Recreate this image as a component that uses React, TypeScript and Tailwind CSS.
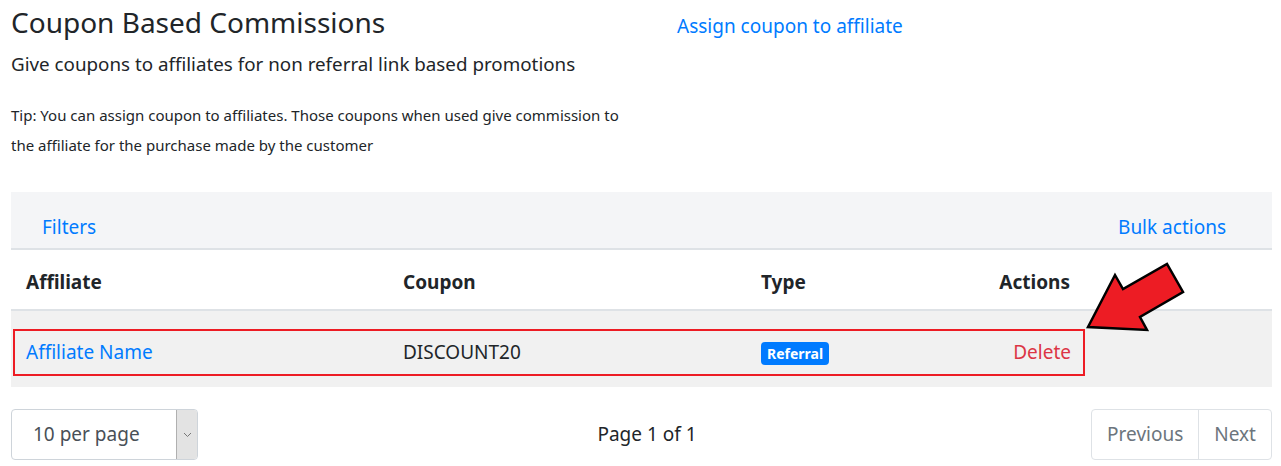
import React from "react";

const cols = "grid grid-cols-[377px_358px_238px_72px] items-center";

function Arrow() {
  return (
    <svg
      className="pointer-events-none absolute left-0 top-0"
      width="1281"
      height="466"
      viewBox="0 0 1281 466"
    >
      <polygon
        points="1088,327 1115,275 1123,289 1167,264 1183,292 1140,317 1147,330"
        fill="#ed1c24"
        stroke="#000"
        strokeWidth="2.5"
        strokeLinejoin="miter"
      />
    </svg>
  );
}

export default function App() {
  return (
    <div className="relative h-[466px] w-[1281px] overflow-hidden bg-white font-['Noto_Sans',sans-serif] text-[#212529]">
      <div className="flex h-[192px]">
        <div className="w-[665px] pl-[11px]">
          <h1 className="pt-[2px] text-[28px] leading-[40px] font-normal">Coupon Based Commissions</h1>
          <p className="mt-[2px] text-[18.8px] leading-[40px]">
            Give coupons to affiliates for non referral link based promotions
          </p>
          <p className="mt-[16px] text-[15px] leading-[30px]">
            Tip: You can assign coupon to affiliates. Those coupons when used give commission to
            <br />
            the affiliate for the purchase made by the customer
          </p>
        </div>
        <div className="pl-[12px] pt-[11px]">
          <a className="text-[19px] leading-[30px] text-[#007bff]">Assign coupon to affiliate</a>
        </div>
      </div>

      <div className="mx-[11px] w-[1261px]">
        <div className="flex h-[58px] items-center justify-between border-b-2 border-[#dee2e6] bg-[#f4f5f7] pl-[31px] pr-[46px] pt-[14px]">
          <a className="text-[19px] text-[#007bff]">Filters</a>
          <a className="text-[19px] text-[#007bff]">Bulk actions</a>
        </div>
        <div className={`${cols} h-[61px] border-b-2 border-[#dee2e6] pl-[15px] pt-[5px] text-[19px] font-bold`}>
          <div>Affiliate</div>
          <div>Coupon</div>
          <div>Type</div>
          <div className="pr-[1px] text-right">Actions</div>
        </div>
        <div className="bg-[#f1f1f1] pb-[11px] pl-[2px] pt-[18px]">
          <div className={`${cols} h-[47px] w-[1072px] border-2 border-[#ed1c24] pl-[11px] text-[19px]`}>
            <a className="text-[#007bff]">Affiliate Name</a>
            <div>DISCOUNT20</div>
            <div>
              <span className="rounded-[4px] bg-[#007bff] px-[6px] py-[2px] text-[14px] font-bold text-white">
                Referral
              </span>
            </div>
            <a className="text-right text-[#dc3545]">Delete</a>
          </div>
        </div>

        <div className="mt-[22px] flex items-center justify-between">
          <div className="flex h-[51px] w-[187px] overflow-hidden rounded-[4px] border border-[#ced4da]">
            <div className="flex flex-1 items-center pl-[21px] text-[19px] text-[#495057]">10 per page</div>
            <div className="flex w-[21px] items-center justify-center border-l border-[#b0b0b0] bg-[#e3e3e3]">
              <svg width="9" height="6" viewBox="0 0 9 6">
                <path d="M1 1l3.5 3.5L8 1" fill="none" stroke="#777" strokeWidth="1" />
              </svg>
            </div>
          </div>
          <div className="ml-[5px] text-[19px]">Page 1 of 1</div>
          <div className="flex h-[51px] overflow-hidden rounded-[4px] border border-[#dee2e6] text-[19px] text-[#6c757d]">
            <div className="flex items-center border-r border-[#dee2e6] px-[15px]">Previous</div>
            <div className="flex items-center px-[15px]">Next</div>
          </div>
        </div>
      </div>

      <Arrow />
    </div>
  );
}
